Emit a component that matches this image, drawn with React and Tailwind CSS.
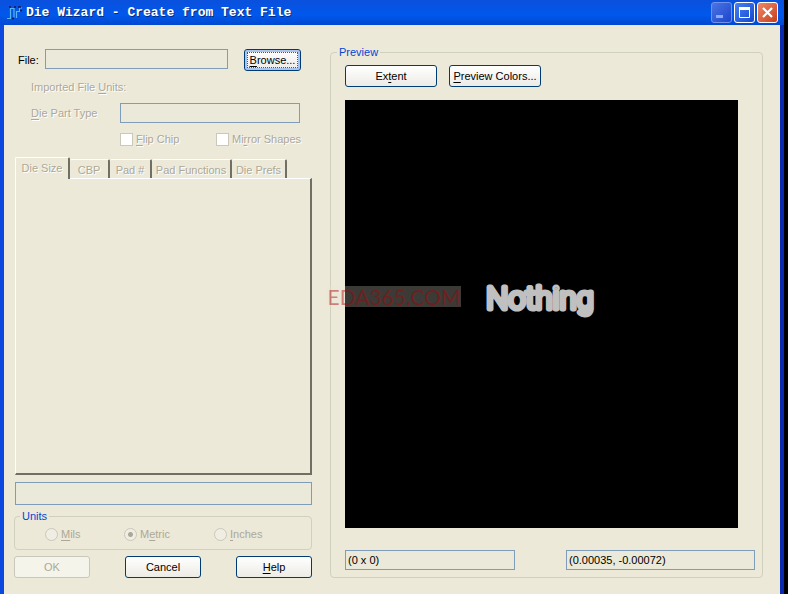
import React from "react";

const UI = "font-['Liberation_Sans',Arial,sans-serif] text-[11px] leading-[14px]";
const ETCHED = "text-[#aca899] [text-shadow:1px_1px_0_#ffffff]";
const FIELD = "min-w-0 border border-[#7f9db9] bg-[#ebe9d9] px-[2px] text-black outline-none";
const BUTTON =
  "flex h-[22px] items-center justify-center whitespace-nowrap rounded-[3px] border border-[#003c74] bg-linear-to-b from-white to-[#ecebe5] text-black";

function Key({ children }) {
  return <span className="underline underline-offset-2">{children}</span>;
}

function TitleBar() {
  const box = "flex h-[21px] w-[21px] items-center justify-center rounded-[3px] border";
  return (
    <header className="flex h-[25px] items-center bg-linear-to-b from-[#0a50dc] via-[#0058ec] via-60% to-[#0048d0] pl-[7px] pr-[6px]">
      <svg className="mr-[3px] h-[16px] w-[16px] shrink-0" viewBox="0 0 16 16" fill="none" aria-hidden="true">
        <path d="M0 13.500h3.500V3.500h3.500v9M9.500 13V6.500h3V3h2.500" stroke="#58b4f0" strokeWidth="1.200" />
        <path d="M2 2h2M7 2h2M11 2h3M13 5.500h2M5 13.500h2" stroke="#101858" strokeWidth="1.500" />
      </svg>
      <h1 className="min-w-0 flex-1 truncate font-['Liberation_Mono','Courier_New',monospace] text-[13px] leading-[16px] font-bold text-white [text-shadow:1px_1px_0_#0a2a80]">
        Die Wizard - Create from Text File
      </h1>
      <div className="flex gap-[2px]">
        <button type="button" aria-label="Minimize" className={`${box} border-[#6f92ea] bg-linear-to-br from-[#4c74e4] to-[#1c44cc]`}>
          <svg className="h-[19px] w-[19px]" viewBox="0 0 19 19" aria-hidden="true">
            <path d="M4 12h7v3H4z" fill="#8faaf4" />
          </svg>
        </button>
        <button type="button" aria-label="Maximize" className={`${box} border-white bg-linear-to-br from-[#4a80f0] to-[#1246d0]`}>
          <svg className="h-[19px] w-[19px]" viewBox="0 0 19 19" fill="none" aria-hidden="true">
            <path d="M4.500 5v9.500h10V5" stroke="#fff" />
            <path d="M4 5.500h11" stroke="#fff" strokeWidth="3" />
          </svg>
        </button>
        <button type="button" aria-label="Close" className={`${box} border-white bg-linear-to-br from-[#ee8868] to-[#c83c14]`}>
          <svg className="h-[19px] w-[19px]" viewBox="0 0 19 19" fill="none" aria-hidden="true">
            <path d="M5 5l9 9M14 5l-9 9" stroke="#fff" strokeWidth="2.200" />
          </svg>
        </button>
      </div>
    </header>
  );
}

function Check({ id, className, children }) {
  return (
    <div className={`flex items-center gap-[3px] ${className}`}>
      <input id={id} type="checkbox" disabled className="h-[13px] w-[13px] shrink-0 appearance-none border border-[#cac8bb] bg-white" />
      <label htmlFor={id} className={`whitespace-nowrap ${ETCHED}`}>{children}</label>
    </div>
  );
}

function Radio({ id, checked, className, children }) {
  return (
    <div className={`flex items-center gap-[3px] ${className}`}>
      <input
        id={id}
        type="radio"
        name="units"
        disabled
        defaultChecked={checked}
        className="h-[13px] w-[13px] shrink-0 appearance-none rounded-full border border-[#cac8bb] bg-[#f0eee2] checked:bg-[radial-gradient(circle,#aca899_0_2px,#f0eee2_3px)]"
      />
      <label htmlFor={id} className="whitespace-nowrap text-[#aca899]">{children}</label>
    </div>
  );
}

function Tab({ width, active, children }) {
  return (
    <button
      type="button"
      role="tab"
      aria-selected={!!active}
      disabled
      className={`shrink-0 whitespace-nowrap rounded-t-[2px] border-t border-l border-r-2 border-t-white border-l-white border-r-[#716f64] ${ETCHED} ${width} ${
        active ? "relative -mb-px h-[22px] bg-[#ece9d8] pb-[2px]" : "h-[19px] border-l-0 pt-px"
      }`}
    >
      {children}
    </button>
  );
}

function ImportForm() {
  return (
    <form className="flex w-[298px] shrink-0 flex-col pt-[24px] pb-[16px]">
      <div className="flex items-start pl-[4px]">
        <label htmlFor="file" className="w-[27px] pt-[4px]">File:</label>
        <input id="file" type="text" className={`h-[20px] w-[183px] ${FIELD}`} />
        <button type="button" className={`${BUTTON} ml-[16px] w-[57px] shadow-[inset_0_0_0_2px_#a9c2ee] outline-1 -outline-offset-4 outline-dotted outline-[#555]`}>
          <span><Key>B</Key>rowse...</span>
        </button>
      </div>
      <p className={`mt-[9px] pl-[17px] ${ETCHED}`}>Imported File <Key>U</Key>nits:</p>
      <div className="mt-[9px] flex items-center pl-[17px]">
        <label htmlFor="part" className={`w-[89px] ${ETCHED}`}><Key>D</Key>ie Part Type</label>
        <input id="part" type="text" disabled className={`h-[20px] w-[180px] ${FIELD}`} />
      </div>
      <div className="mt-[9px] flex pl-[106px]">
        <Check id="flip" className="w-[96px]"><Key>F</Key>lip Chip</Check>
        <Check id="mirror">Mi<Key>r</Key>ror Shapes</Check>
      </div>
      <div role="tablist" className="mt-[11px] ml-px flex items-end">
        <Tab active width="w-[55px]">Die Size</Tab>
        <Tab width="w-[40px]">CBP</Tab>
        <Tab width="w-[42px]">Pad #</Tab>
        <Tab width="w-[80px]">Pad Functions</Tab>
        <Tab width="w-[55px]">Die Prefs</Tab>
      </div>
      <div role="tabpanel" className="ml-px min-h-[200px] flex-1 border-t border-r-2 border-b-2 border-l border-t-white border-r-[#716f64] border-b-[#716f64] border-l-white" />
      <input type="text" aria-label="Status" readOnly className={`mt-[7px] ml-px h-[23px] ${FIELD}`} />
      <fieldset className="mt-[4px] rounded-[4px] border border-[#d0d0bf] pl-[30px] pb-[8px]">
        <legend className="-ml-[25px] px-[2px] text-[#0046d5]">Units</legend>
        <div className="flex pt-[4px]">
          <Radio id="mils" className="w-[79px]"><Key>M</Key>ils</Radio>
          <Radio id="metric" checked className="w-[90px]">M<Key>e</Key>tric</Radio>
          <Radio id="inches"><Key>I</Key>nches</Radio>
        </div>
      </fieldset>
      <div className="mt-[6px] flex justify-between">
        <button type="submit" disabled className="h-[22px] w-[76px] rounded-[3px] border border-[#c9c7ba] bg-[#f5f4ea] text-[#aca899]">OK</button>
        <button type="button" className={`${BUTTON} w-[76px]`}>Cancel</button>
        <button type="button" className={`${BUTTON} w-[76px]`}><span><Key>H</Key>elp</span></button>
      </div>
    </form>
  );
}

function Preview() {
  return (
    <fieldset className="mt-[20px] mb-[16px] flex min-w-0 flex-1 flex-col rounded-[4px] border border-[#d0d0bf] pr-[7px] pb-[7px] pl-[14px]">
      <legend className="-ml-[8px] px-[2px] text-[#0046d5]">Preview</legend>
      <div className="flex h-full flex-col">
        <div className="flex gap-[12px] pt-[6px]">
          <button type="button" className={`${BUTTON} w-[92px]`}><span>Ex<Key>t</Key>ent</span></button>
          <button type="button" className={`${BUTTON} w-[92px]`}><span><Key>P</Key>review Colors...</span></button>
        </div>
        <div className="relative mt-[13px] mr-[17px] flex min-h-[200px] flex-1 items-center justify-center bg-black pb-[26px]">
          <svg className="h-[44px] w-[120px]" viewBox="0 0 120 44" role="img" aria-label="Nothing">
            <text
              x="58"
              y="30"
              textAnchor="middle"
              className="fill-[#c0c0c0] stroke-[#c0c0c0] font-[Roboto,sans-serif] text-[31px] font-light"
              strokeWidth="5"
              strokeLinejoin="round"
            >
              Nothing
            </text>
          </svg>
          <span className="absolute top-[186px] -left-[18px] flex h-[21px] w-[134px] items-center justify-center whitespace-nowrap bg-[#ece9d8]/25 font-[Lato,sans-serif] text-[21px] leading-[21px] text-[#a80000]/45">
            EDA365.COM
          </span>
        </div>
        <div className="mt-[22px] flex justify-between">
          <input type="text" aria-label="Extent size" readOnly value="(0 x 0)" className={`h-[20px] w-[170px] ${FIELD}`} />
          <input type="text" aria-label="Cursor position" readOnly value="(0.00035, -0.00072)" className={`h-[20px] w-[189px] ${FIELD}`} />
        </div>
      </div>
    </fieldset>
  );
}

export default function App() {
  return (
    <div className={`flex min-h-screen flex-col border-r-4 border-black bg-[#0040c8] ${UI}`}>
      <TitleBar />
      <main className="flex flex-1 gap-[18px] border-x-4 border-r-[#0a2ab0] border-l-[#0a48e0] bg-[#ece9d8] pr-[17px] pl-[10px]">
        <ImportForm />
        <Preview />
      </main>
    </div>
  );
}
